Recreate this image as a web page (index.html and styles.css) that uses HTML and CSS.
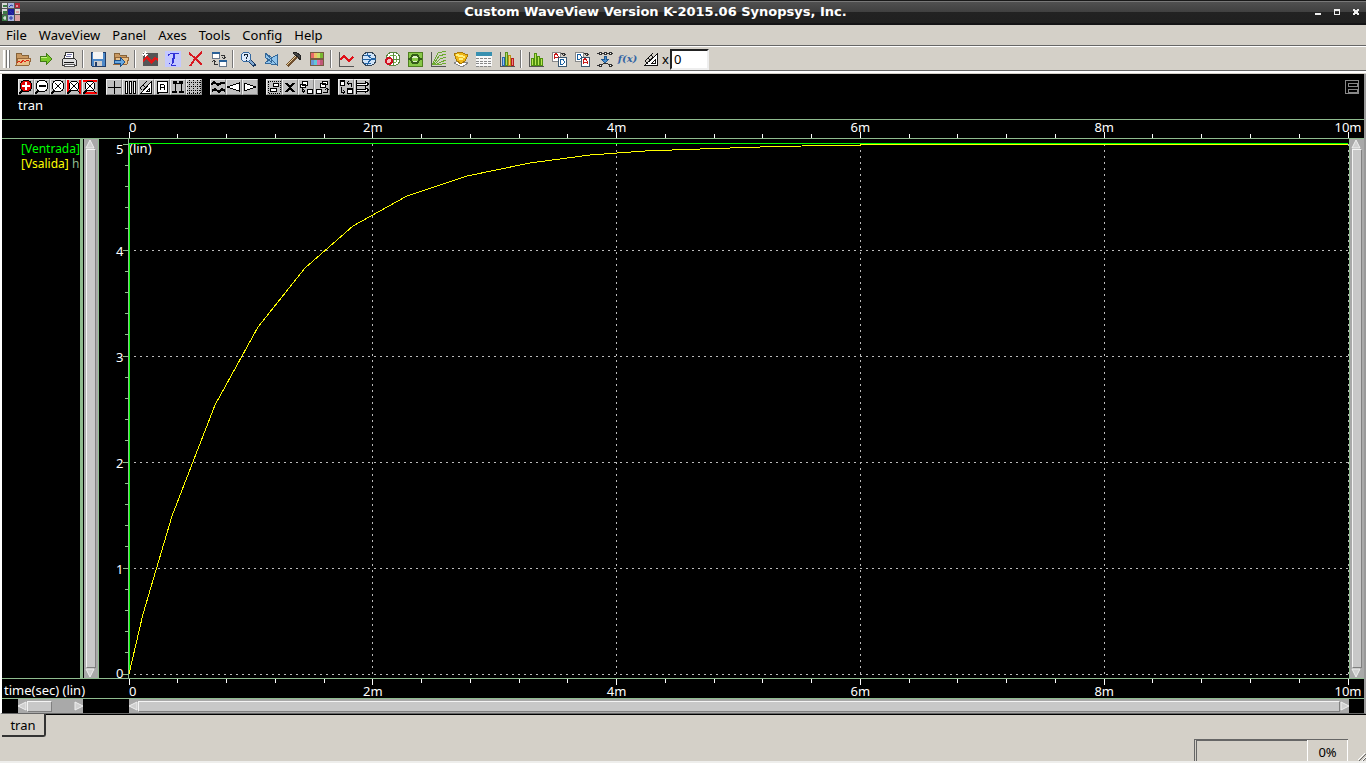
FILE: index.html
```html
<!DOCTYPE html>
<html lang="en">
<head>
    <meta charset="UTF-8">
    <meta name="viewport" content="width=device-width, initial-scale=1.0">
    <title>Custom WaveView</title>
    <link rel="stylesheet" href="styles.css">
</head>
<body>
<header class="titlebar">
    <svg class="app-icon" viewBox="0 0 18 18">
        <path fill="#555" d="M0 0h18v18H0z"/>
        <path fill="#d8d8d8" d="M0 0h5v5H0zM0 6h5v5H0zM13 6h5v5h-5z"/>
        <path fill="#3c7a46" d="M1 2h4v2H1zM1 8h4v3H1zM0 12h5v6H0z"/>
        <path fill="#a8b4dc" d="M6 0h6v5H6zM6 12h6v6H6z"/>
        <path fill="#1c1c9c" d="M6 6h6v6H6z"/>
        <path fill="#b02838" d="M13 0h5v5h-5z"/>
        <path fill="#d8a0a0" d="M13 12h5v6h-5zM14 8h3v2h-3z"/>
        <path stroke="#2838a8" fill="none" d="M7 4l2-2 2 1M8 8l3 3M9 13v4M7 15h4"/>
        <path stroke="#fff" fill="none" d="M1 15h3M3 13v4M14 3h2"/>
    </svg>
    <h1>Custom WaveView Version K-2015.06 Synopsys, Inc.</h1>
    <div class="window-buttons">
        <button aria-label="Minimize"><svg viewBox="0 0 7 7"><path fill="#eee" d="M0 4h6v2H0z"/></svg></button>
        <button aria-label="Maximize"><svg viewBox="0 0 7 7"><path fill="#eee" fill-rule="evenodd" d="M0 0h6v6H0zM1 2v3h4V2z"/></svg></button>
        <button aria-label="Close"><svg viewBox="0 0 7 7"><path fill="#eee" d="M0 0h2v1h2V0h2v2H5v2h1v2H4V5H2v1H0V4h1V2H0z"/></svg></button>
    </div>
</header>

<nav class="menubar">
    <button>File</button>
    <button>WaveView</button>
    <button>Panel</button>
    <button>Axes</button>
    <button>Tools</button>
    <button>Config</button>
    <button>Help</button>
</nav>

<div class="toolbar">
    <span class="grip"></span>
    <button aria-label="Open waveform"><svg viewBox="0 0 16 16"><path fill="#c89860" stroke="#856238" d="M1 13V2h5l1 2h6v3"/><path fill="#e8c088" stroke="#96683a" d="M1 14l2-7h13l-2 7z"/><path fill="none" stroke="#e02010" d="M2 12l2-2 2 2 2-3 2 2 2-2 2 1"/></svg></button>
    <button aria-label="Import"><svg viewBox="0 0 16 16"><path fill="#78c828" stroke="#427b18" d="M2 5h6V2l6 6-6 6v-4H2z"/><path stroke="#c8f080" d="M3 6h6"/></svg></button>
    <button aria-label="Print"><svg viewBox="0 0 16 16"><path fill="#fff" stroke="#333" d="M5 1h8l-1 7H3z"/><path stroke="#77a" d="M6 3h5M5 5h5"/><path fill="#ddd" stroke="#333" d="M3 7h10l2 2v5H1V9z"/><path stroke="#111" d="M3 11h10"/><path fill="#fff" stroke="#555" d="M3 13h10v2H3z"/></svg></button>
    <span class="sep"></span>
    <button aria-label="Save"><svg viewBox="0 0 16 16"><path fill="#4c88c8" stroke="#203c68" d="M1 1h14v14H2l-1-1z"/><path fill="#f4f4f4" d="M3 1h10v7H3z"/><path fill="#ccc" d="M4 10h8v5H4z"/><path fill="#203c68" d="M5 11h2v4H5z"/></svg></button>
    <button aria-label="Load session"><svg viewBox="0 0 16 16"><path fill="#c89860" stroke="#856238" d="M1 12V2h5l1 2h6v3"/><path fill="#e8c088" stroke="#96683a" d="M1 13l2-7h13l-2 7z"/><path fill="#68a8e0" stroke="#1e5088" d="M1 9h6V6l5 5-5 5v-4H1z"/></svg></button>
    <span class="sep"></span>
    <button aria-label="New waveview"><svg viewBox="0 0 16 16"><path fill="#555" d="M1 2h15v13H1z"/><path fill="#e01818" d="M1 8l4-3 4 4 3-3 4 1v3l-3-1-4 4-4-5-4 3z"/><path stroke="#fff" d="M0 3h6M3 0v6M1 1l4 4M5 1L1 5"/></svg></button>
    <button aria-label="Text"><svg viewBox="0 0 16 16"><path fill="#c4c8ff" d="M0 0h16v16H0z"/><path fill="none" stroke="#3030d8" d="M3 5c0-3 5-2 11-2M10 3L8 12c0 2-4 1-4 0M9 3L7 12M6 14h5"/></svg></button>
    <button aria-label="Delete"><svg viewBox="0 0 16 16"><path fill="none" stroke="#d81820" stroke-width="2" d="M1 2c5 4 9 8 13 12M14 1C8 6 5 10 2 15"/></svg></button>
    <button aria-label="Swap panels"><svg viewBox="0 0 16 16"><path fill="#fff" stroke="#68788c" d="M1 2h7v5H1zM8 10h7v5H8z"/><path stroke="#286098" stroke-width="2" d="M1 2h8M8 10h8"/><path fill="none" stroke="#333" d="M10 4h3v4M11 6l2 2 2-2M3 9v4h4M1 11l2-2 2 2"/></svg></button>
    <span class="sep"></span>
    <button aria-label="Query"><svg viewBox="0 0 16 16"><path stroke="#183860" stroke-width="4" d="M9 9l6 6"/><path stroke="#80a8d0" stroke-width="2" d="M10 10l4 4"/><circle cx="6" cy="6" r="5" fill="#dceafc" stroke="#3468a0" stroke-width="1"/><path fill="none" stroke="#123" d="M4 5c0-3 4-2 4 0L6 7v1M6 9v1"/></svg></button>
    <button aria-label="Compare"><svg viewBox="0 0 16 16"><path fill="#90c4ec" stroke="#346898" d="M2 2l6 4v5l-6-5zM8 7l6-3v10L2 12z"/><path stroke="#346898" d="M2 2l12 12"/></svg></button>
    <button aria-label="Preferences"><svg viewBox="0 0 16 16"><path stroke="#705030" stroke-width="3" d="M1 15L11 5"/><path stroke="#ecd49c" d="M1 14l9-9"/><path fill="#444" stroke="#222" d="M7 2l3-1 5 4-1 4-2-3-3-2z"/></svg></button>
    <button aria-label="Colors"><svg viewBox="0 0 16 16"><path fill="#775c40" d="M1 1h14v14H1z"/><path fill="#e86868" d="M2 2h3v5H2z"/><path fill="#f0c068" d="M5 2h3v5H5z"/><path fill="#c8e068" d="M8 2h3v5H8z"/><path fill="#78b830" d="M11 2h3v5h-3z"/><path fill="#6898d8" d="M2 9h3v5H2z"/><path fill="#60c8d8" d="M5 9h3v5H5z"/><path fill="#e070a8" d="M8 9h3v5H8z"/><path fill="#c05878" d="M11 9h3v5h-3z"/></svg></button>
    <span class="sep"></span>
    <button aria-label="XY plot"><svg viewBox="0 0 16 16"><path fill="none" stroke="#555" d="M1 1v14h15"/><path fill="none" stroke="#e01018" stroke-width="2" d="M2 9l4-4 5 5 4-4"/></svg></button>
    <button aria-label="Smith chart"><svg viewBox="0 0 16 16"><circle cx="8" cy="8" r="7" fill="#d0e4f8" stroke="#345"/><path fill="none" stroke="#2464a4" d="M1 8h14M15 8c-4 0-8-2-9-6M15 8c-4 0-8 2-9 6M3 4h7M3 12h7"/></svg></button>
    <button aria-label="Polar plot"><svg viewBox="0 0 16 16"><circle cx="9" cy="8" r="7" fill="#fff" stroke="#5c8840"/><circle cx="9" cy="8" r="4" fill="none" stroke="#74b044"/><path stroke="#5c8840" d="M9 1v14M2 8h14"/><circle cx="5" cy="10" r="3" fill="#f8c0c0" stroke="#d01020" stroke-width="2"/></svg></button>
    <button aria-label="Eye diagram"><svg viewBox="0 0 16 16"><path fill="#88c848" stroke="#508020" d="M1 1h14v14H1z"/><path fill="#e0f0c8" stroke="#345c18" stroke-width="2" d="M1 8h2l3-4h4l3 4h2M3 8l3 4h4l3-4"/><path fill="#88c848" d="M5 7h6v3H5z"/></svg></button>
    <button aria-label="Sweep"><svg viewBox="0 0 16 16"><path fill="none" stroke="#555" d="M1 1v14h15"/><path fill="none" stroke="#6caa30" d="M2 14L8 2l8-2M3 14l6-9 7-2M4 14l6-6 6-2M5 14l6-3 5-2M6 14l6-1 4-1"/></svg></button>
    <button aria-label="Surface"><svg viewBox="0 0 16 16"><path fill="#fff" stroke="#888" d="M1 12l4-2 10 2-6 4z"/><path fill="#f0b818" stroke="#a87808" d="M1 3l6-2 8 3-3 6-4 3-4-3z"/><path stroke="#fff080" stroke-width="2" d="M3 4l5 1 4 1M6 8h4"/></svg></button>
    <button aria-label="Table"><svg viewBox="0 0 16 16"><path fill="#f8f8f8" d="M0 1h16v14H0z"/><path fill="#3890b0" d="M0 1h16v4H0z"/><path stroke="#888" stroke-dasharray="3 1" d="M0 7h16M0 10h16M0 12h16M0 15h16"/></svg></button>
    <button aria-label="Histogram"><svg viewBox="0 0 16 16"><path fill="#90c0f0" stroke="#2868b0" d="M3 6h2v8H3z"/><path fill="#b0d868" stroke="#589018" d="M6 1h2v13H6z"/><path fill="#f8d868" stroke="#b89018" d="M9 4h2v10H9z"/><path fill="#f08080" stroke="#b82020" d="M12 7h2v7h-2z"/><path fill="none" stroke="#555" d="M1 1v14h15"/></svg></button>
    <span class="sep"></span>
    <button aria-label="FFT"><svg viewBox="0 0 16 16"><path fill="#b8e850" stroke="#509010" d="M3 7h2v7H3zM6 2h2v12H6zM9 5h2v9H9zM12 7h2v7h-2z"/><path fill="none" stroke="#555" d="M1 1v14h15"/></svg></button>
    <button aria-label="Analog to digital"><svg viewBox="0 0 16 16"><path fill="#fff" stroke="#888" d="M1 1h8v9H1z"/><path fill="none" stroke="#c81818" d="M3 8V5l2-3 2 3v3M3 6h4"/><path fill="#fff" stroke="#3c5870" d="M7 6h8v9H7z"/><path fill="none" stroke="#1860a0" d="M9 8h3l1 2v2l-1 1H9z"/><path fill="none" stroke="#333" d="M10 2h3v3M11 3l2 2 2-2"/></svg></button>
    <button aria-label="Digital to analog"><svg viewBox="0 0 16 16"><path fill="#fff" stroke="#888" d="M1 1h8v9H1z"/><path fill="none" stroke="#1860a0" d="M3 3h3l1 2v2L6 8H3z"/><path fill="#fff" stroke="#3c5870" d="M7 6h8v9H7z"/><path fill="none" stroke="#c81818" d="M9 13v-3l2-3 2 3v3M9 11h4"/><path fill="none" stroke="#333" d="M10 2h3v3M11 3l2 2 2-2"/></svg></button>
    <button aria-label="Convert"><svg viewBox="0 0 16 16"><path fill="none" stroke="#333" d="M0 2h16M0 14h5l2-2h3l2 2h4"/><path fill="#fff" stroke="#333" d="M2 1h2v2H2zM7 1h2v2H7zM12 1h2v2h-2zM2 13h2v2H2zM12 13h2v2h-2z"/><path fill="#4890d0" stroke="#205890" d="M7 5h2v3h3l-4 4-4-4h3z"/></svg></button>
    <button aria-label="Equation builder"><span class="fx">f(x)</span></button>
    <button aria-label="Measure"><svg viewBox="0 0 16 16"><path fill="#fff" stroke="#111" d="M2 14L14 3v11zM9 12l3-3v3z"/><path stroke="#111" d="M2 10l8-8M2 10l3 3M5 7l2 2M8 4l2 2"/></svg></button>
    <label class="factor">x<input type="text" value="0"></label>
</div>

<main class="waveview">
    <div class="panel-head">
        <div class="mini-toolbar">
            <div class="group">
                <button aria-label="Zoom in"><svg viewBox="0 0 16 16"><path stroke="#000" stroke-width="2" d="M5 11l-4 4"/><circle cx="8" cy="7" r="6" fill="#e00000" stroke="#000"/><path stroke="#fff" stroke-width="2" d="M4 7h8M8 3v8"/></svg></button>
                <button aria-label="Zoom out"><svg viewBox="0 0 16 16"><path stroke="#000" stroke-width="2" d="M5 11l-4 4"/><circle cx="8" cy="7" r="6" fill="#fff" stroke="#000"/><path stroke="#000" stroke-width="2" d="M5 7h7"/></svg></button>
                <button aria-label="Zoom area"><svg viewBox="0 0 16 16"><path stroke="#000" stroke-width="2" d="M5 11l-4 4"/><circle cx="8" cy="7" r="6" fill="#fff" stroke="#000"/><path stroke="#000" d="M5 4l6 6M11 4l-6 6"/></svg></button>
                <button aria-label="Zoom X"><svg viewBox="0 0 16 16"><path stroke="#f00" stroke-width="2" d="M2 1v14M14 1v14"/><path stroke="#000" stroke-width="2" d="M5 11l-4 4"/><circle cx="8" cy="7" r="5" fill="#fff" stroke="#000"/><path stroke="#000" d="M5 4l6 6M11 4l-6 6M11 11l3 3"/></svg></button>
                <button aria-label="Zoom Y"><svg viewBox="0 0 16 16"><path stroke="#f00" stroke-width="2" d="M1 2h14M1 14h14"/><path stroke="#000" stroke-width="2" d="M5 11l-4 4"/><circle cx="8" cy="7" r="5" fill="#fff" stroke="#000"/><path stroke="#000" d="M5 4l6 6M11 4l-6 6M11 11l3 3"/></svg></button>
            </div>
            <div class="group">
                <button aria-label="Cursor"><svg viewBox="0 0 16 16"><path stroke="#000" d="M8 2v13M2 8h13"/></svg></button>
                <button aria-label="Columns"><svg viewBox="0 0 16 16"><path fill="#fff" stroke="#000" d="M3 2h2v12H3zM7 2h2v12H7zM11 2h2v12h-2z"/></svg></button>
                <button aria-label="Ruler"><svg viewBox="0 0 16 16"><path fill="#fff" stroke="#000" d="M3 14L13 3v11zM9 12l2-2v2z"/><path fill="none" stroke="#000" d="M2 9l7-7M2 9l2 2M5 6l2 2"/></svg></button>
                <button aria-label="Annotate"><svg viewBox="0 0 16 16"><path fill="#fff" stroke="#000" d="M3 2h10v11H6l-3 2z"/><path fill="none" stroke="#000" d="M6 11V6l1-1h2l1 1v5M6 8h4"/></svg></button>
                <button aria-label="Markers"><svg viewBox="0 0 16 16"><path stroke="#000" d="M5 2v11M11 2v11M5 4h7"/><path fill="#000" d="M3 2h4v3H3zM9 2h4v3H9zM2 12h5v2H2zM9 12h5v2H9z"/></svg></button>
                <button aria-label="Grid"><svg viewBox="0 0 16 16"><path stroke="#000" stroke-dasharray="1 1" d="M1 3h14M1 7h14M1 11h14M1 14h14M3 1v14M7 1v14M11 1v14M14 1v14"/></svg></button>
            </div>
            <div class="group">
                <button aria-label="Waves"><svg viewBox="0 0 16 16"><path fill="none" stroke="#000" stroke-width="2" d="M1 6l3-3 4 3 3-2h4"/><path fill="none" stroke="#000" stroke-width="2" d="M2 12l3-2 4 3 3-3 3 2"/></svg></button>
                <button aria-label="Previous"><svg viewBox="0 0 16 16"><path fill="#fff" stroke="#000" d="M1 8l12-4v8z"/></svg></button>
                <button aria-label="Next"><svg viewBox="0 0 16 16"><path fill="#fff" stroke="#000" d="M14 8L2 4v8z"/></svg></button>
            </div>
            <div class="group">
                <button aria-label="Select all"><svg viewBox="0 0 16 16"><path fill="none" stroke="#000" stroke-dasharray="1 1" d="M2 2h12v12H2z"/><path fill="#fff" stroke="#000" d="M7 4h5v3H7zM4 9h6v3H4z"/></svg></button>
                <button aria-label="Remove"><svg viewBox="0 0 16 16"><path stroke="#000" stroke-width="2" d="M4 4l8 9M12 4l-8 9"/></svg></button>
                <button aria-label="Group"><svg viewBox="0 0 16 16"><path fill="#fff" stroke="#000" d="M4 2h5v4H4zM2 5h5v3H2zM9 10h5v4H9z"/><path fill="none" stroke="#000" d="M4 9v3h3M5 10l2 2-2 2"/></svg></button>
                <button aria-label="Ungroup"><svg viewBox="0 0 16 16"><path fill="#fff" stroke="#000" d="M8 2h5v3H8zM6 4h5v4H6zM2 10h5v4H2z"/><path fill="none" stroke="#000" d="M9 13h4v-3M11 11l2-2 2 2"/></svg></button>
            </div>
            <div class="group">
                <button aria-label="Swap"><svg viewBox="0 0 16 16"><path fill="#fff" stroke="#000" d="M2 2h4v4H2zM9 10h5v4H9z"/><path stroke="#000" stroke-width="2" d="M2 2h5M9 10h6"/><path fill="none" stroke="#000" d="M13 8V4h-4M11 2L9 4l2 2M3 8v5h4M5 11l2 2-2 2"/></svg></button>
                <button aria-label="Align"><svg viewBox="0 0 16 16"><path fill="#fff" stroke="#000" d="M2 1v14M2 4h9V2l4 3-4 3V6H2M2 10h9V8l4 3-4 3v-2H2"/></svg></button>
            </div>
            <button class="panel-menu" aria-label="Panel layout"><svg viewBox="0 0 14 14"><path fill="none" stroke="#888" stroke-width="2" d="M0 0h14v14H0z"/><path fill="none" stroke="#888" d="M3 3h9v3H3zM3 9h9v3H3z"/></svg></button>
        </div>
        <div class="panel-name">tran</div>
    </div>

    <div class="ruler ruler-top">
        <svg id="rulerTop"></svg>
    </div>

    <div class="panel">
        <div class="legend">
            <div class="sig-in">[Ventrada]</div>
            <div class="sig-out">[Vsalida] <span>h</span></div>
        </div>
        <div class="splitter"></div>
        <div class="scroll vertical left">
            <svg viewBox="0 0 12 9"><path fill="#d0d0d0" stroke="#eee" d="M6 0l4 8H2z"/></svg>
            <div class="thumb"></div>
            <svg viewBox="0 0 12 9"><path fill="#d0d0d0" stroke="#eee" d="M2 1h8L6 9z"/></svg>
        </div>
        <svg class="y-axis" id="yAxis"></svg>
        <div class="plot">
            <svg>
                <g id="grid"></g>
                <text x="0" y="9">(lin)</text>
                <line class="wave in" x1="0" x2="100%" y1="-1" y2="-1"/>
                <line class="wave in" x1="0" x2="0" y1="-1" y2="100%"/>
                <svg viewBox="0 0 1219 530" preserveAspectRatio="none" width="100%" height="100%" overflow="visible">
                    <path class="wave out" d="M0 530L14 470 43 372 86 261 129 183 176 124 224 82 278 52 338 32 401 19 461 11 516 7 571 5 631 3 673 2 733 1"/>
                </svg>
                <line class="wave out" x1="60%" x2="100%" y1="0" y2="0"/>
            </svg>
        </div>
        <div class="scroll vertical">
            <svg viewBox="0 0 12 9"><path fill="#d0d0d0" stroke="#eee" d="M6 0l4 8H2z"/></svg>
            <div class="thumb"></div>
            <svg viewBox="0 0 12 9"><path fill="#d0d0d0" stroke="#eee" d="M2 1h8L6 9z"/></svg>
        </div>
    </div>

    <div class="ruler ruler-bottom">
        <span class="unit">time(sec) (lin)</span>
        <svg id="rulerBottom"></svg>
    </div>

    <div class="scroll-row">
        <div class="scroll horizontal legend-scroll">
            <svg viewBox="0 0 9 12"><path fill="#d0d0d0" stroke="#eee" d="M0 6l8-4v8z"/></svg>
            <div class="thumb"></div>
            <svg viewBox="0 0 9 12"><path fill="#d0d0d0" stroke="#eee" d="M1 2l8 4-8 4z"/></svg>
        </div>
        <div class="scroll horizontal time-scroll">
            <svg viewBox="0 0 9 12"><path fill="#d0d0d0" stroke="#eee" d="M0 6l8-4v8z"/></svg>
            <div class="thumb"></div>
            <svg viewBox="0 0 9 12"><path fill="#d0d0d0" stroke="#eee" d="M1 2l8 4-8 4z"/></svg>
        </div>
    </div>
</main>

<div class="tabs">
    <button class="tab">tran</button>
    <span class="tab-rest"></span>
</div>

<footer class="statusbar">
    <div class="progress">
        <div class="bar"></div>
        <div class="percent">0%</div>
    </div>
    <svg class="size-grip" viewBox="0 0 8 8"><path stroke="#fff" d="M0 7l7-7M4 8l4-4"/><path stroke="#666" d="M1 8l7-7M5 8l3-3"/></svg>
</footer>

<script>
    const NS = 'http://www.w3.org/2000/svg';

    function add(parent, name, attrs, text) {
        const el = document.createElementNS(NS, name);
        for (const key in attrs) el.setAttribute(key, attrs[key]);
        if (text !== undefined) el.textContent = text;
        parent.appendChild(el);
    }

    // time axis, 0 to 10m with five minor steps per label
    function drawRuler(id, top) {
        const svg = document.getElementById(id);
        for (let i = 0; i <= 25; i++) {
            const x = i * 4 + '%';
            const major = i % 5 === 0;
            if (top) {
                add(svg, 'line', {x1: x, x2: x, y1: major ? 12 : 14, y2: 18});
            } else {
                add(svg, 'line', {x1: x, x2: x, y1: 0, y2: major ? 6 : 4});
            }
            if (major) {
                const n = i / 5 * 2;
                add(svg, 'text', {x: x, y: top ? 12 : 17, 'class': n ? 'mid' : ''}, n ? n + 'm' : '0');
            }
        }
    }

    // voltage axis, 0 to 5
    function drawYAxis() {
        const svg = document.getElementById('yAxis');
        for (let i = 0; i <= 25; i++) {
            const y = i * 4 + '%';
            add(svg, 'line', {x1: i % 5 ? 26 : 24, x2: 30, y1: y, y2: y});
            if (i % 5 === 0) {
                add(svg, 'text', {x: 17, y: y, dy: i === 0 ? 10 : i === 25 ? 4 : 6}, 5 - i / 5);
            }
        }
    }

    function drawGrid() {
        const grid = document.getElementById('grid');
        for (let i = 1; i <= 5; i++) {
            const p = i * 20 + '%';
            add(grid, 'line', {x1: 5, x2: '100%', y1: p, y2: p});
            add(grid, 'line', {x1: p, x2: p, y1: 0, y2: '100%'});
        }
    }

    drawRuler('rulerTop', true);
    drawRuler('rulerBottom', false);
    drawYAxis();
    drawGrid();
</script>
</body>
</html>
```
FILE: styles.css
```css
:root {
    --face: #d4d0c8;
    --axis: #8fbc8f;
    --track: #a9a9a9;
    --thumb: #c8c8c8;
}

* {
    box-sizing: border-box;
}

body {
    margin: 0;
    height: 100vh;
    display: flex;
    flex-direction: column;
    overflow: hidden;
    background: var(--face);
    border-bottom: 2px solid #eeeeec;
    font-family: "Noto Sans", "Open Sans", sans-serif;
    font-size: 13px;
    line-height: 16px;
    color: #000;
}

button {
    margin: 0;
    padding: 0;
    border: 0;
    background: none;
    font: inherit;
    color: inherit;
}

svg {
    display: block;
}

/* window title */
.titlebar {
    height: 25px;
    flex: none;
    display: flex;
    align-items: center;
    padding: 0 6px 0 2px;
    border-top: 1px solid #181818;
    border-bottom: 2px solid #141416;
    background: linear-gradient(#787878 0 1px, #505050 1px, #404040 11px, #222 11px, #202020);
}

.app-icon {
    width: 18px;
    height: 18px;
}

.titlebar h1 {
    flex: 1;
    margin: 0;
    padding-right: 24px;
    font: bold 13px/20px "DejaVu Sans", sans-serif;
    text-align: center;
    color: #fff;
}

.window-buttons {
    display: flex;
    gap: 12px;
}

.window-buttons svg {
    width: 7px;
    height: 7px;
    shape-rendering: crispEdges;
}

.menubar {
    height: 22px;
    flex: none;
    display: flex;
    align-items: center;
    gap: 12px;
    padding: 0 6px 2px;
    border-bottom: 1px solid #fff;
    box-shadow: inset 0 -1px #666;
}

/* main toolbar */
.toolbar {
    height: 26px;
    flex: none;
    display: flex;
    align-items: center;
    padding-left: 3px;
    border-bottom: 2px solid #fff;
    box-shadow: inset 0 -1px #666;
}

.grip {
    width: 6px;
    height: 18px;
    margin-right: 2px;
    border: solid #fff;
    border-width: 0 2px;
    box-shadow: 1px 0 #777, inset -1px 0 #777;
}

.toolbar button {
    width: 23px;
    height: 22px;
    display: flex;
    align-items: center;
    justify-content: center;
}

.toolbar button svg {
    width: 16px;
    height: 16px;
    shape-rendering: crispEdges;
}

.sep {
    width: 2px;
    height: 18px;
    margin: 0 2px;
    background: linear-gradient(90deg, #777 50%, #fff 50%);
}

.fx {
    font: italic bold 10px/16px "DejaVu Serif", serif;
    color: #3465a4;
}

.factor {
    display: flex;
    align-items: center;
    gap: 1px;
}

.factor input {
    width: 39px;
    height: 21px;
    padding: 0 2px;
    border: 2px solid;
    border-color: #222 #eee #eee #222;
    border-radius: 0;
    background: #fff;
    font: inherit;
}

/* wave panel */
.waveview {
    flex: 1;
    min-height: 0;
    display: flex;
    flex-direction: column;
    margin: 1px 0 0;
    border: solid;
    border-width: 0 2px 1px 2px;
    border-color: #fff #999 #666 #fff;
    background: #000;
    color: #fff;
}

.panel-head {
    height: 45px;
    padding: 5px 5px 0 16px;
}

.mini-toolbar {
    display: flex;
    gap: 8px;
}

.group {
    display: flex;
}

.group button {
    width: 16px;
    height: 16px;
    background: #c0c0c0;
    border: 1px solid;
    border-color: #eee #888 #888 #eee;
}

.group svg {
    width: 16px;
    height: 16px;
    margin: -1px;
    shape-rendering: crispEdges;
}

.panel-menu {
    margin-left: auto;
}

.panel-menu svg {
    width: 14px;
    height: 14px;
    shape-rendering: crispEdges;
}

.panel-name {
    margin-top: 2px;
}

.ruler {
    display: flex;
    padding: 0 16px 0 127px;
}

.ruler svg {
    width: 100%;
    height: 18px;
    overflow: visible;
}

.ruler line {
    stroke: #fff;
    shape-rendering: crispEdges;
}

.ruler-top {
    border-top: 1px solid var(--axis);
    border-bottom: 1px solid var(--axis);
}

.ruler-bottom {
    padding-left: 0;
    border-top: 1px solid var(--axis);
    border-bottom: 1px solid var(--axis);
}

.ruler-bottom svg {
    flex: 1;
    height: 19px;
}

.unit {
    width: 127px;
    flex: none;
    padding: 4px 0 0 2px;
    line-height: 15px;
}

text {
    fill: #fff;
}

.mid {
    text-anchor: middle;
}

.panel {
    flex: 1;
    min-height: 0;
    display: grid;
    grid-template-columns: 78px 3px 16px 29px 1fr 15px;
}

.legend {
    overflow: hidden;
    padding: 2px 0 0 19px;
    font-size: 12px;
    line-height: 15px;
    white-space: nowrap;
}

.sig-in {
    color: #00ff00;
}

.sig-out {
    color: #ffff00;
}

.sig-out span {
    color: var(--axis);
}

.splitter {
    background: var(--axis);
}

.y-axis {
    width: 29px;
    height: calc(100% - 9px);
    margin-top: 5px;
    overflow: visible;
}

.y-axis line {
    stroke: var(--axis);
    shape-rendering: crispEdges;
}

.plot {
    min-height: 0;
    padding: 5px 1px 4px 0;
    border-left: 1px solid var(--axis);
}

.plot > svg {
    width: 100%;
    height: 100%;
    overflow: visible;
}

#grid line {
    stroke: #bbb;
    stroke-dasharray: 2 4;
    shape-rendering: crispEdges;
}

.wave {
    fill: none;
    stroke-width: 1px;
    vector-effect: non-scaling-stroke;
    shape-rendering: crispEdges;
}

.in {
    stroke: #00ff00;
}

.out {
    stroke: #ffff00;
}

/* motif style scrollbars */
.scroll {
    display: flex;
    background: var(--track);
}

.scroll svg {
    flex: none;
}

.vertical {
    flex-direction: column;
    align-items: flex-start;
    padding: 1px 0;
    border-left: 1px solid var(--axis);
}

.vertical.left {
    border-left-color: #000;
    border-right: 1px solid var(--axis);
}

.vertical svg {
    width: 12px;
    height: 9px;
}

.thumb {
    flex: 1;
    background: var(--thumb);
    border: 1px solid;
    border-color: #f4f4f4 #808080 #808080 #f4f4f4;
}

.vertical .thumb {
    width: 10px;
    margin-left: 2px;
}

.horizontal {
    height: 14px;
    align-items: center;
}

.horizontal svg {
    width: 9px;
    height: 12px;
}

.horizontal .thumb {
    height: 11px;
}

.scroll-row {
    display: flex;
    padding: 0 15px 0 16px;
}

.legend-scroll {
    width: 65px;
    margin-right: 46px;
}

.legend-scroll .thumb {
    flex: none;
    width: 25px;
    margin-right: auto;
}

.time-scroll {
    flex: 1;
}

/* bottom */
.tabs {
    flex: none;
    height: 25px;
    display: flex;
    align-items: flex-start;
    padding-left: 2px;
}

.tab {
    width: 44px;
    height: 23px;
    border: solid #333;
    border-width: 0 2px 2px 0;
    border-bottom-right-radius: 3px;
}

.tab-rest {
    flex: 1;
    border-top: 1px solid #000;
}

.statusbar {
    flex: none;
    display: flex;
    justify-content: flex-end;
    align-items: flex-end;
}

.progress {
    display: flex;
    width: 154px;
    height: 22px;
    margin-right: 10px;
    border: solid #666;
    border-width: 1px 0 0 1px;
}

.bar {
    flex: 1;
    margin-left: 1px;
    border: solid #666;
    border-width: 1px 0 0 1px;
}

.percent {
    width: 41px;
    border: solid #fff;
    border-width: 0 1px;
    line-height: 24px;
    text-align: center;
}

.size-grip {
    width: 8px;
    height: 8px;
}
```
